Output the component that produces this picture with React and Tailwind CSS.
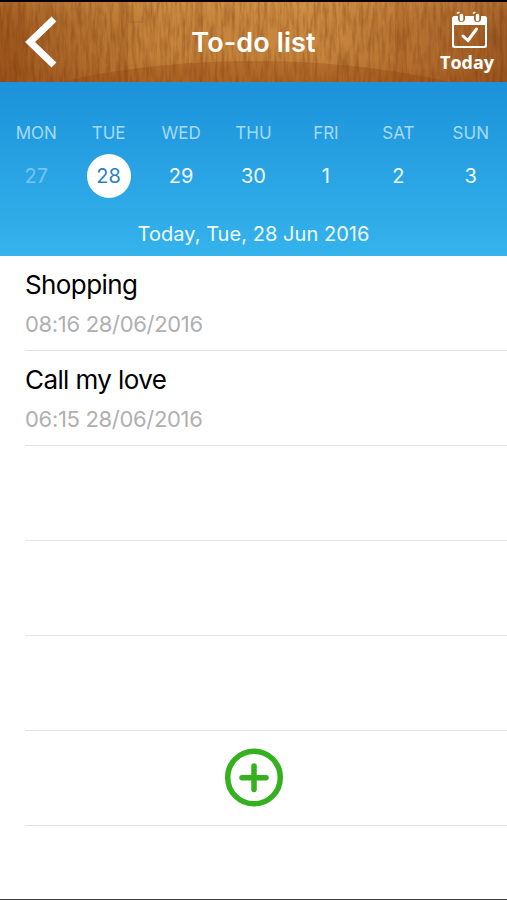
const days = [
  { name: "MON", date: 27, past: true },
  { name: "TUE", date: 28, selected: true },
  { name: "WED", date: 29 },
  { name: "THU", date: 30 },
  { name: "FRI", date: 1 },
  { name: "SAT", date: 2 },
  { name: "SUN", date: 3 },
];

const todos = [
  { title: "Shopping", time: "08:16 28/06/2016" },
  { title: "Call my love", time: "06:15 28/06/2016" },
  null,
  null,
  null,
  null,
];

function WoodTexture() {
  return (
    <svg
      className="absolute inset-0 h-full w-full"
      viewBox="0 0 507 80"
      preserveAspectRatio="none"
      aria-hidden="true"
    >
      <defs>
        <linearGradient id="wood" x1="0" x2="1" y1="0" y2="0">
          <stop offset="0" stopColor="#a15b20" />
          <stop offset="0.12" stopColor="#ab6729" />
          <stop offset="0.3" stopColor="#c5833b" />
          <stop offset="0.62" stopColor="#ca8941" />
          <stop offset="0.8" stopColor="#b97433" />
          <stop offset="1" stopColor="#9c5a24" />
        </linearGradient>
        <linearGradient id="shade" x1="0" x2="0" y1="0" y2="1">
          <stop offset="0" stopColor="#e5a95a" stopOpacity="0.25" />
          <stop offset="0.5" stopColor="#b0641f" stopOpacity="0" />
          <stop offset="1" stopColor="#8a3a08" stopOpacity="0.25" />
        </linearGradient>
        <filter id="grain" x="0" y="0" width="100%" height="100%" colorInterpolationFilters="sRGB">
          <feTurbulence type="fractalNoise" baseFrequency="0.28 0.04" numOctaves="3" seed="12" />
          <feColorMatrix values="0 0 0 0 0.42  0 0 0 0 0.19  0 0 0 0 0.03  0.75 0 0 0 -0.28" />
        </filter>
      </defs>
      <rect width="507" height="80" fill="url(#wood)" />
      <rect width="507" height="80" fill="url(#shade)" />
      <rect width="507" height="80" filter="url(#grain)" />
      <path d="M60 80Q150 59 254 59T450 80Z" fill="#8b3e0c" opacity="0.28" />
      <path d="M0 0h27v80H0zM118 0h10v80h-10zM195 0h8v80h-8zM395 0h12v80h-12z" fill="#85400f" opacity="0.14" />
      <path d="M128 20h15" stroke="#7b3c10" opacity="0.25" />
    </svg>
  );
}

function CalendarIcon() {
  return (
    <svg className="h-[37px] w-[37px]" viewBox="0 0 37 37" fill="none">
      <path
        d="M3.500 5H7v2.500a3.500 3.500 0 0 0 7 0V5h9v2.500a3.500 3.500 0 0 0 7 0V5h3.500a2.500 2.500 0 0 1 2.500 2.500V34.500a2.500 2.500 0 0 1-2.500 2.500h-30A2.500 2.500 0 0 1 1 34.500V7.500A2.500 2.500 0 0 1 3.500 5ZM3 14v19.500a1.500 1.500 0 0 0 1.500 1.500h28a1.500 1.500 0 0 0 1.500-1.500V14Z"
        fill="white"
        fillRule="evenodd"
      />
      <path d="M10.500 4.500v4M26.500 4.500v4" stroke="white" strokeWidth="3.500" strokeLinecap="round" />
      <path d="M6.500 2 8 1.500M22.500 2 24 1.500" stroke="white" strokeWidth="1.500" strokeLinecap="round" />
      <path d="m12 25 5 4.500 8.500-11.500" stroke="white" strokeWidth="3" strokeLinecap="round" />
    </svg>
  );
}

function Header() {
  return (
    <header className="relative h-[82px] shrink-0 border-t-2 border-black">
      <WoodTexture />
      <div className="relative flex h-full items-center justify-center pt-px">
        <h1 className="text-[27px] leading-8 font-semibold tracking-[0.1px] text-white">To-do list</h1>
      </div>

      {/* Back */}
      <button className="absolute top-[14px] left-[25px]" aria-label="Back">
        <svg className="h-[52px] w-[32px]" viewBox="0 0 32 52" fill="none">
          <path d="M29 3 5 26l24 23" stroke="white" strokeWidth="7" />
        </svg>
      </button>

      {/* Today */}
      <button className="absolute top-[9px] right-3 flex w-[56px] flex-col items-center text-white">
        <div className="pl-[4px]">
          <CalendarIcon />
        </div>
        <span className="mt-[3px] font-['Open_Sans',sans-serif] text-[18px] leading-[22px] font-bold">Today</span>
      </button>
    </header>
  );
}

function WeekStrip() {
  return (
    <section className="h-[174px] shrink-0 bg-linear-to-b from-[#1b92da] to-[#35b3ec] pt-[41px]">
      <div className="grid grid-cols-7">
        {days.map((day) => (
          <div key={day.name} className="flex flex-col items-center">
            <span className="text-[17px] leading-5 text-[#a5dafa]">{day.name}</span>
            <span
              className={`mt-[11px] flex size-[44px] items-center justify-center rounded-full text-[20px] ${
                day.selected ? "bg-white text-[#2b83c4]" : day.past ? "text-[#75c4f2]" : "text-[#eefaff]"
              }`}
            >
              {day.date}
            </span>
          </div>
        ))}
      </div>
      <p className="mt-[22px] text-center text-[20px] leading-7 tracking-[0.05px] text-[#eefaff]">
        Today, Tue, 28 Jun 2016
      </p>
    </section>
  );
}

function TodoRow({ todo }) {
  return (
    <li className="ml-[25px] h-[95px] border-b border-[#e4e4e6] pt-[13px]">
      {todo && (
        <>
          <p className="text-[26px] leading-8 tracking-[-0.600px] text-black">{todo.title}</p>
          <p className="mt-[9px] text-[22px] leading-7 tracking-[-0.320px] text-[#b0b0b0]">{todo.time}</p>
        </>
      )}
    </li>
  );
}

export default function App() {
  return (
    <div className="relative flex h-[900px] w-[507px] flex-col overflow-hidden border-b border-[#3f3f3f] bg-white font-[Inter,sans-serif]">
      <Header />
      <WeekStrip />
      <ul>
        {todos.map((todo, i) => (
          <TodoRow key={i} todo={todo} />
        ))}
      </ul>

      {/* Add button */}
      <button className="absolute top-[748px] left-[224px]" aria-label="Add">
        <svg className="size-[60px]" viewBox="0 0 60 60" fill="none" stroke="#35b01f">
          <circle cx="30" cy="29.500" r="26.300" strokeWidth="5.500" />
          <path d="M30 18v23.500M18 29.700h24" strokeWidth="5.500" strokeLinecap="round" />
        </svg>
      </button>
    </div>
  );
}
